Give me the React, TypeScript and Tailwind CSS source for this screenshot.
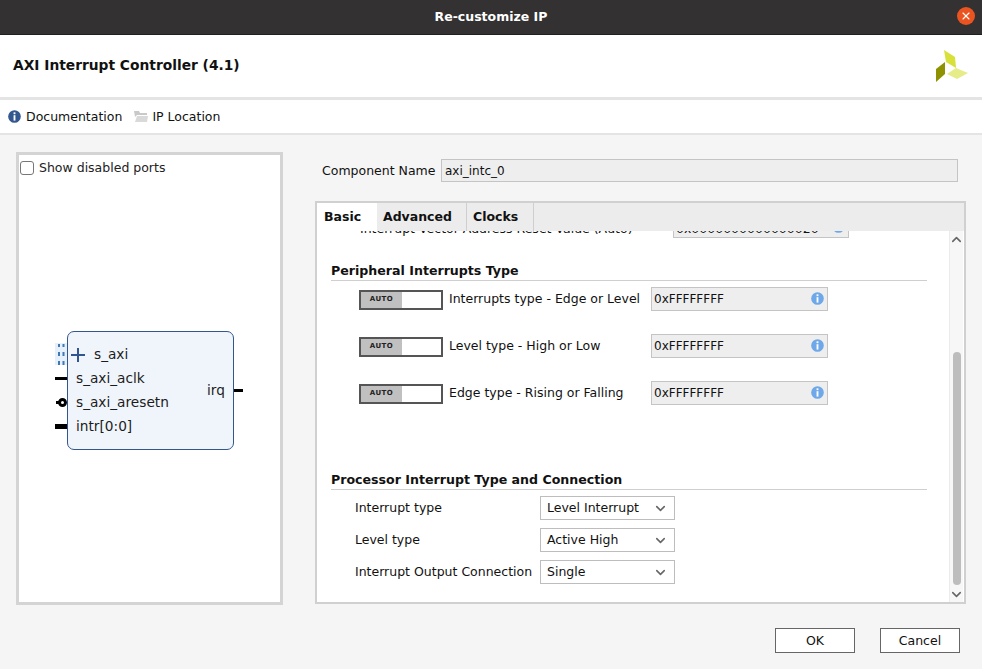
import { ChevronDown, ChevronUp, X } from 'lucide-react';

const font = { fontFamily: '"DejaVu Sans", sans-serif' };

const InfoIcon = ({ color = '#6ea8e8' }: { color?: string }) => (
  <svg width="13" height="13" viewBox="0 0 14 14" className="shrink-0">
    <circle cx="7" cy="7" r="6.8" fill={color} />
    <rect x="6" y="2.5" width="2" height="2" fill="#fff" />
    <rect x="6" y="5.6" width="2" height="5.8" fill="#fff" />
  </svg>
);

const HexField = ({ label }: { label: string }) => (
  <div className="flex items-center h-[25px] pl-[28px]">
    <div className="w-[84px] h-[20px] mt-[2px] border-2 border-[#555] bg-white flex shrink-0">
      <div className="w-[41px] bg-[#c0c0c0] flex items-center justify-center text-[7px] font-bold leading-none tracking-[0.5px] text-[#222]">
        AUTO
      </div>
    </div>
    <span className="ml-[6px] w-[202px] shrink-0 whitespace-nowrap pt-[1px]">{label}</span>
    <div className="w-[177px] h-[24px] border border-[#c4c4c4] bg-[#eeeeee] flex items-center justify-between pl-[2px] pr-[3px]">
      <span className="text-[12px] pt-[1px]">0xFFFFFFFF</span>
      <InfoIcon />
    </div>
  </div>
);

const SelectRow = ({ label, value }: { label: string; value: string }) => (
  <div className="flex items-center h-[24px] pl-[24px]">
    <span className="w-[185px] shrink-0 whitespace-nowrap">{label}</span>
    <div className="w-[135px] h-[24px] border border-[#bdbdbd] bg-white flex items-center justify-between pl-[6px] pr-[6px]">
      <span>{value}</span>
      <ChevronDown size={15} strokeWidth={2.5} className="text-[#666]" />
    </div>
  </div>
);

const SectionTitle = ({ children }: { children: string }) => (
  <div className="font-bold text-[12.6px] leading-[18px] border-b border-[#cfcfcf] h-[19px]">{children}</div>
);

const Diagram = () => (
  <div className="absolute left-[36px] top-[176px] w-[230px] h-[120px] text-[13.7px] text-[#1c1c1c]">
    {/* ports */}
    <div className="absolute left-0 top-[12px] w-[12px] h-[22px] bg-[#e6f0fa]" />
    <svg width="10" height="24" viewBox="0 0 10 24" className="absolute left-[2px] top-[12px]" fill="#3f78b5">
      <rect x="1" y="1" width="2" height="3" />
      <rect x="1" y="9" width="2" height="4" />
      <rect x="1" y="18" width="2" height="4" />
      <rect x="5.5" y="1" width="2" height="3" />
      <rect x="5.5" y="9" width="2" height="4" />
      <rect x="5.5" y="18" width="2" height="4" />
    </svg>
    <div className="absolute left-[0px] top-[46px] w-[12px] h-[3px] bg-black" />
    <div className="absolute left-[3px] top-[67px] w-[9px] h-[9px] rounded-full border-[3px] border-black bg-white" />
    <div className="absolute left-[1px] top-[70px] w-[3px] h-[3px] bg-black" />
    <div className="absolute left-[0px] top-[93px] w-[12px] h-[5px] bg-black" />
    <div className="absolute left-[177px] top-[58px] w-[11px] h-[3px] bg-black" />
    {/* block */}
    <div className="absolute left-[12px] top-0 w-[167px] h-[119px] rounded-[7px] border border-[#33568f] bg-[#f0f5fb]" />
    <svg width="14" height="14" viewBox="0 0 14 14" className="absolute left-[16px] top-[17px]">
      <path d="M7 0v14M0 7h14" stroke="#31568f" strokeWidth="2" />
    </svg>
    <span className="absolute left-[39px] top-[15px] leading-[16px]">s_axi</span>
    <span className="absolute left-[21px] top-[39px] leading-[16px]">s_axi_aclk</span>
    <span className="absolute left-[21px] top-[63px] leading-[16px]">s_axi_aresetn</span>
    <span className="absolute left-[21px] top-[87px] leading-[16px]">intr[0:0]</span>
    <span className="absolute left-[152px] top-[51px] leading-[16px]">irq</span>
  </div>
);

export default function App() {
  return (
    <div style={font} className="w-[982px] h-[669px] flex flex-col bg-[#f5f5f5] text-[12.5px] text-[#111] overflow-hidden">
      {/* title bar */}
      <div className="h-[35px] bg-[#333131] border-b border-[#1f1f1f] flex items-center justify-center relative shrink-0">
        <span className="text-white font-bold text-[12.5px]">Re-customize IP</span>
        <div className="absolute right-[7px] top-[7px] w-[18px] h-[18px] rounded-full bg-[#ea5421] flex items-center justify-center">
          <X size={12} strokeWidth={2.2} className="text-white" />
        </div>
      </div>

      {/* header */}
      <div className="h-[62px] bg-white flex items-center justify-between pl-[13px] pr-[14px] shrink-0">
        <span className="font-bold text-[13.8px] -mt-[2px]">AXI Interrupt Controller (4.1)</span>
        <svg width="32" height="34" viewBox="0 0 32 34">
          <polygon points="8,1 19,8 20,19 10,13" fill="#d8e03a" />
          <polygon points="20,19 32,24 21,30 11,25" fill="#e6ec88" />
          <polygon points="9,13 9,25 0,33 0,20" fill="#8f9200" />
        </svg>
      </div>

      {/* toolbar */}
      <div className="h-[38px] border-t-[3px] border-b-[2px] border-[#e4e4e4] bg-white flex items-center pl-[8px] shrink-0">
        <InfoIcon color="#33578f" />
        <span className="ml-[5px] pt-[1px]">Documentation</span>
        <svg width="14" height="13" viewBox="0 0 14 13" className="ml-[12px]">
          <path d="M0 1h5l1 2h7v2H3L1 7z" fill="#c9c9c9" />
          <path d="M1 12l2-6h11l-1 6z" fill="#d9d9d9" />
        </svg>
        <span className="ml-[4px] pt-[1px]">IP Location</span>
      </div>

      {/* body */}
      <div className="flex-1 flex pl-[16px] pt-[17px] relative">
        {/* diagram panel */}
        <div className="relative w-[267px] h-[453px] border-[3px] border-[#d4d4d4] bg-white shrink-0">
          <label className="flex items-center pl-[1px] pt-[4px] h-[22px]">
            <span className="w-[14px] h-[14px] rounded-[3px] border border-[#777] bg-white" />
            <span className="ml-[5px] text-[#222]">Show disabled ports</span>
          </label>
          <Diagram />
        </div>

        {/* right side */}
        <div className="ml-[32px] w-[651px] flex flex-col">
          <div className="flex items-center h-[23px] mt-[7px] pl-[7px]">
            <span className="w-[119px] shrink-0 whitespace-nowrap pt-[1px]">Component Name</span>
            <div className="w-[517px] h-[23px] border border-[#c4c4c4] bg-[#eeeeee] flex items-center pl-[3px] text-[12px] pt-[1px]">
              axi_intc_0
            </div>
          </div>

          {/* tab panel */}
          <div className="mt-[19px] h-[403px] border-[2px] border-[#d0d0d0] bg-white flex flex-col overflow-hidden">
            <div className="relative z-10 h-[28px] bg-[#ececec] flex shrink-0 font-bold text-[12.5px]">
              <div className="w-[60px] bg-white pl-[7px] flex items-center">Basic</div>
              <div className="w-[90px] border-r border-[#cfcfcf] pl-[6px] flex items-center">Advanced</div>
              <div className="w-[67px] border-r border-[#cfcfcf] pl-[6px] flex items-center">Clocks</div>
            </div>

            <div className="flex-1 flex min-h-0">
              <div className="flex-1 min-w-0 pl-[14px] pr-[22px]">
                {/* row scrolled off the top */}
                <div className="flex items-center h-[24px] -mt-[17px] pl-[29px]">
                  <span className="w-[313px] shrink-0 whitespace-nowrap pt-[6px]">Interrupt Vector Address Reset Value (Auto)</span>
                  <div className="w-[176px] h-[24px] border border-[#c4c4c4] bg-[#eeeeee] flex items-center justify-between pl-[2px] pr-[3px]">
                    <span className="pt-[6px]">0x0000000000000020</span>
                    <InfoIcon />
                  </div>
                </div>

                <div className="mt-[24px]">
                  <SectionTitle>Peripheral Interrupts Type</SectionTitle>
                </div>
                <div className="mt-[5px] flex flex-col gap-[22px]">
                  <HexField label="Interrupts type - Edge or Level" />
                  <HexField label="Level type - High or Low" />
                  <HexField label="Edge type - Rising or Falling" />
                </div>

                <div className="mt-[66px]">
                  <SectionTitle>Processor Interrupt Type and Connection</SectionTitle>
                </div>
                <div className="mt-[6px] flex flex-col gap-[8px]">
                  <SelectRow label="Interrupt type" value="Level Interrupt" />
                  <SelectRow label="Level type" value="Active High" />
                  <SelectRow label="Interrupt Output Connection" value="Single" />
                </div>
              </div>

              {/* scrollbar */}
              <div className="w-[14px] mr-[1px] border-l border-[#ececec] bg-[#f7f7f7] flex flex-col items-center shrink-0">
                <ChevronUp size={15} strokeWidth={2.5} className="text-[#666] mt-[1px] shrink-0" />
                <div className="w-[8px] mt-[105px] h-[233px] rounded-[4px] bg-[#bdbdbd] shrink-0" />
                <ChevronDown size={15} strokeWidth={2.5} className="text-[#666] mt-[2px] shrink-0" />
              </div>
            </div>
          </div>
        </div>

        {/* footer buttons */}
        <div className="absolute right-[22px] top-[493px] flex gap-[25px]">
          <div className="w-[80px] h-[25px] border border-[#666] bg-white flex items-center justify-center pt-[1px]">OK</div>
          <div className="w-[80px] h-[25px] border border-[#666] bg-white flex items-center justify-center pt-[1px]">Cancel</div>
        </div>
      </div>
    </div>
  );
}
